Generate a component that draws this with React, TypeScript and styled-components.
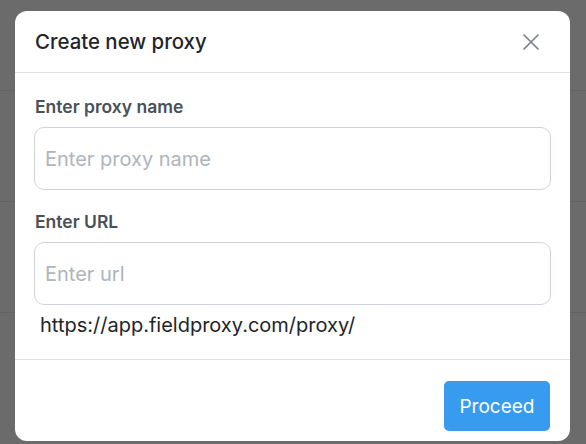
import React from "react";
import styled, { createGlobalStyle } from "styled-components";

const Global = createGlobalStyle`
  html, body { margin: 0; padding: 0; }
  body {
    width: 586px;
    height: 444px;
    overflow: hidden;
    font-family: Inter, "Noto Sans", "Liberation Sans", sans-serif;
  }
`;

const Backdrop = styled.div`
  width: 586px;
  height: 444px;
  box-sizing: border-box;
  padding: 11px 16px 0 15px;
  background-color: #6b6b6b;
  background-image:
    linear-gradient(#626262, #626262),
    linear-gradient(#626262, #626262),
    linear-gradient(#626262, #626262);
  background-size: 100% 1px;
  background-repeat: no-repeat;
  background-position: 0 90px, 0 201px, 0 312px;
`;

const Modal = styled.div`
  width: 555px;
  height: 430px;
  background: #ffffff;
  border-radius: 12px;
  display: flex;
  flex-direction: column;
  overflow: hidden;
`;

const Header = styled.div`
  height: 61px;
  flex-shrink: 0;
  display: flex;
  align-items: center;
  justify-content: space-between;
  padding: 0 31px 0 20px;
  border-bottom: 1px solid #dee2e6;
`;

const Title = styled.h2`
  margin: 0;
  font-size: 20.4px;
  font-weight: 500;
  color: #212529;
`;

const CloseButton = styled.button`
  border: none;
  background: transparent;
  padding: 0;
  width: 16px;
  height: 16px;
  display: flex;
  align-items: center;
  justify-content: center;
  cursor: pointer;
`;

const Body = styled.div`
  padding: 22px 19px 22px 19px;
  display: flex;
  flex-direction: column;
  border-bottom: 1px solid #dee2e6;
`;

const Field = styled.div`
  display: flex;
  flex-direction: column;
  gap: 8px;
  & + & {
    margin-top: 20px;
  }
`;

const Label = styled.label`
  font-size: 17.5px;
  line-height: 24px;
  font-weight: 600;
  color: #495057;
  padding-left: 1px;
`;

const Input = styled.input`
  box-sizing: border-box;
  width: 100%;
  height: 63px;
  border: 1px solid #ced4da;
  border-radius: 10px;
  padding: 0 10px;
  font-family: inherit;
  font-size: 20px;
  color: #212529;
  outline: none;
  &::placeholder {
    color: #adb5bd;
  }
`;

const UrlHint = styled.div`
  margin-top: 8px;
  padding-left: 6px;
  font-size: 20px;
  line-height: 24px;
  color: #212529;
`;

const Footer = styled.div`
  flex: 1;
  display: flex;
  justify-content: flex-end;
  align-items: flex-start;
  padding: 21px 20px 0 20px;
`;

const PrimaryButton = styled.button`
  width: 106px;
  height: 50px;
  border: none;
  border-radius: 5px;
  background: #379cef;
  color: #ffffff;
  font-family: inherit;
  font-size: 19px;
  font-weight: 400;
  cursor: pointer;
`;

export default function App() {
  return (
    <>
      <Global />
      <Backdrop>
        <Modal>
          <Header>
            <Title>Create new proxy</Title>
            <CloseButton aria-label="Close">
              <svg width="16" height="16" viewBox="0 0 16 16">
                <path d="M1 1 L15 15 M15 1 L1 15" stroke="#7a838c" strokeWidth="1.7" strokeLinecap="round" />
              </svg>
            </CloseButton>
          </Header>
          <Body>
            <Field>
              <Label>Enter proxy name</Label>
              <Input placeholder="Enter proxy name" />
            </Field>
            <Field>
              <Label>Enter URL</Label>
              <Input placeholder="Enter url" />
            </Field>
            <UrlHint>https://app.fieldproxy.com/proxy/</UrlHint>
          </Body>
          <Footer>
            <PrimaryButton>Proceed</PrimaryButton>
          </Footer>
        </Modal>
      </Backdrop>
    </>
  );
}
